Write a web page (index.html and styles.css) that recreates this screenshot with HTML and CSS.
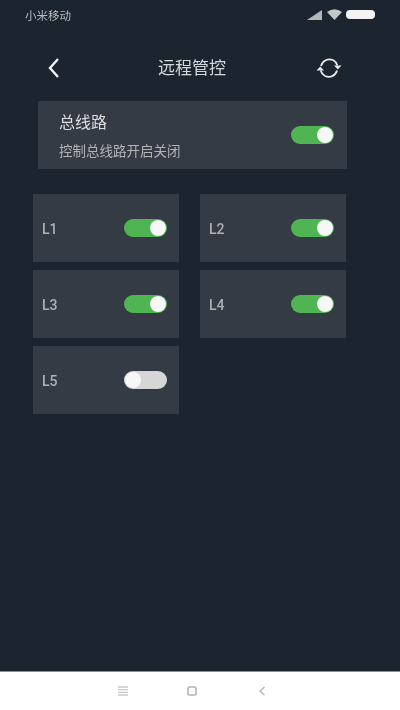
FILE: index.html
```html
<!DOCTYPE html>
<html lang="zh">
<head>
    <meta charset="UTF-8">
    <meta name="viewport" content="width=device-width, initial-scale=1.0">
    <title>远程管控</title>
    <link rel="stylesheet" href="styles.css">
</head>
<body>
    <div class="screen">
        <div class="status-bar">
            <span class="carrier">小米移动</span>
            <div class="status-icons">
                <svg class="signal" width="16" height="10" viewBox="0 0 16 10"><path d="M0 10 L15 0 V10 Z" fill="#b4b6b9"/></svg>
                <svg class="wifi" width="15" height="11" viewBox="0 0 15 11"><path d="M0 3 Q7.5 -2.5 15 3 L7.5 11 Z" fill="#c4c6c8"/></svg>
                <div class="battery"></div>
            </div>
        </div>

        <div class="header">
            <svg class="back" width="14" height="22" viewBox="0 0 14 22"><path d="M11 2 L3 11 L11 20" fill="none" stroke="#f0f1f2" stroke-width="2.4"/></svg>
            <h1>远程管控</h1>
            <svg class="refresh" width="28" height="24" viewBox="0 0 28 24">
                <path d="M6 10 C7.500 4.500 13 2 18 4 C20 5 21.500 6.500 22.300 9.500" fill="none" stroke="#e6e7e9" stroke-width="1.800"/>
                <path d="M19 9.500 H26.500 L22.800 13.500 Z" fill="#e6e7e9"/>
                <path d="M22 14.500 C20.500 20 15 22 10 20 C8 19 6.500 17.500 5.700 14.500" fill="none" stroke="#e6e7e9" stroke-width="1.800"/>
                <path d="M1.500 14.500 H9 L5.200 10.500 Z" fill="#e6e7e9"/>
            </svg>
        </div>

        <div class="main-card">
            <div class="main-text">
                <div class="main-title">总线路</div>
                <div class="main-desc">控制总线路开启关闭</div>
            </div>
            <div class="switch on"></div>
        </div>

        <div class="lines">
            <div class="line-card"><span>L1</span><div class="switch on"></div></div>
            <div class="line-card"><span>L2</span><div class="switch on"></div></div>
            <div class="line-card"><span>L3</span><div class="switch on"></div></div>
            <div class="line-card"><span>L4</span><div class="switch on"></div></div>
            <div class="line-card"><span>L5</span><div class="switch"></div></div>
        </div>

        <div class="nav-bar">
            <svg width="10" height="10" viewBox="0 0 10 10"><path d="M0 1 H10 M0 3.700 H10 M0 6.300 H10 M0 9 H10" stroke="#c9c9c9" stroke-width="1.300"/></svg>
            <svg class="nav-home" width="10" height="10" viewBox="0 0 10 10"><rect x="1" y="1" width="8" height="8" rx="1.500" fill="none" stroke="#b4b4b4" stroke-width="1.600"/></svg>
            <svg width="8" height="10" viewBox="0 0 8 10"><path d="M6.500 1 L2 5 L6.500 9" fill="none" stroke="#b8b8b8" stroke-width="1.500"/></svg>
        </div>
    </div>
</body>
</html>
```

FILE: styles.css
```css
* {
    box-sizing: border-box;
}
body {
    margin: 0;
    font-family: "Noto Sans CJK SC", "Noto Sans", sans-serif;
}
/* the reference is a soft, upscaled capture */
.screen {
    width: 400px;
    height: 710px;
    background: #1c2430;
    display: flex;
    flex-direction: column;
    overflow: hidden;
    filter: blur(0.5px);
}
.status-bar {
    height: 29px;
    padding: 0 25px;
    display: flex;
    justify-content: space-between;
    align-items: center;
}
.carrier {
    font-size: 11.500px;
    color: #b9bbbe;
}
.status-icons {
    display: flex;
    align-items: center;
    gap: 4px;
}
.battery {
    width: 29px;
    height: 9px;
    border-radius: 4px;
    background: #f4f4f4;
}
.header {
    height: 42px;
    margin-top: 18px;
    padding: 0 58px 0 47px;
    display: flex;
    justify-content: space-between;
    align-items: center;
}
.header h1 {
    margin: 0 0 4px 8px;
    font-size: 17px;
    font-weight: 400;
    color: #d5d7d9;
}
.refresh {
    margin-right: -1px;
}
.main-card {
    height: 68px;
    margin: 12px 53px 0 38px;
    padding: 0 13px 0 21px;
    background: #343b44;
    display: flex;
    justify-content: space-between;
    align-items: center;
}
.main-text {
    padding-bottom: 3px;
}
.main-title {
    font-size: 16px;
    line-height: 24px;
    color: #dcdddf;
}
.main-desc {
    font-size: 13.500px;
    line-height: 18px;
    margin-top: 8px;
    color: #b2b5b8;
}
.switch {
    width: 43px;
    height: 18px;
    border-radius: 9px;
    background: #d6d6d6;
    display: flex;
    align-items: center;
    padding: 0 1px;
}
.switch::after {
    content: "";
    width: 16px;
    height: 16px;
    border-radius: 50%;
    background: #f7f7f7;
}
.switch.on {
    background: #4fb552;
    justify-content: flex-end;
}
.lines {
    margin: 25px 53px 0 33px;
    display: grid;
    grid-template-columns: 146px 146px;
    grid-auto-rows: 68px;
    column-gap: 21px;
    row-gap: 8px;
}
.line-card {
    background: #343b44;
    padding: 0 12px 0 9px;
    display: flex;
    justify-content: space-between;
    align-items: center;
    font-family: Roboto, sans-serif;
    font-size: 14px;
    font-weight: 500;
    color: #aeb1b4;
}
.line-card span {
    margin-top: 2px;
}
.nav-bar {
    margin-top: auto;
    height: 39px;
    background: #fff;
    border-top: 1px solid #8d9097;
    padding: 0 134px 0 118px;
    display: flex;
    justify-content: space-between;
    align-items: center;
}
.nav-home {
    margin-right: 2px;
}
```
